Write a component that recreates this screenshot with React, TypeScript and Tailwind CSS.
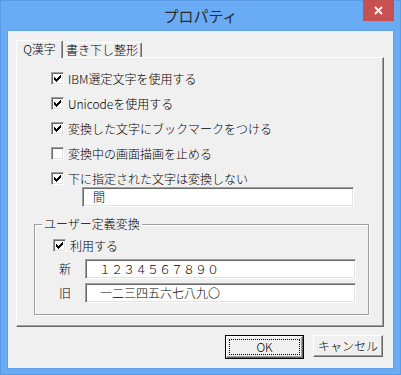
import React from "react";

const FONT = '"Noto Sans CJK JP", "Liberation Sans", sans-serif';

function CheckMark() {
  // classic 7x7 pixel check mark
  const px: [number, number][] = [
    [6, 0],
    [5, 1], [6, 1],
    [0, 2], [4, 2], [5, 2], [6, 2],
    [0, 3], [1, 3], [3, 3], [4, 3], [5, 3],
    [0, 4], [1, 4], [2, 4], [3, 4], [4, 4],
    [1, 5], [2, 5], [3, 5],
    [2, 6],
  ];
  return (
    <svg width="7" height="7" viewBox="0 0 7 7" shapeRendering="crispEdges">
      {px.map(([x, y]) => (
        <rect key={`${x}-${y}`} x={x} y={y} width="1" height="1" fill="#000" />
      ))}
    </svg>
  );
}

function Check({ checked }: { checked: boolean }) {
  return (
    <span className="flex h-[13px] w-[13px] shrink-0 items-center justify-center border border-t-[#a0a0a0] border-l-[#a0a0a0] border-r-white border-b-white bg-white shadow-[inset_1px_1px_0_#696969,inset_-1px_-1px_0_#e3e3e3]">
      {checked && <CheckMark />}
    </span>
  );
}

function CheckRow({ checked, label }: { checked: boolean; label: string }) {
  return (
    <div className="flex h-[13px] items-center gap-[4px]">
      <Check checked={checked} />
      <span className="whitespace-nowrap text-[12px] leading-none">{label}</span>
    </div>
  );
}

function Field({ value, className }: { value: string; className?: string }) {
  return (
    <div
      className={`flex h-[20px] items-center border border-t-[#a0a0a0] border-l-[#a0a0a0] border-r-white border-b-white bg-white shadow-[inset_1px_1px_0_#696969,inset_-1px_-1px_0_#e3e3e3] text-[12px] leading-none ${className ?? ""}`}
    >
      {value}
    </div>
  );
}

export default function App() {
  return (
    <div
      className="flex h-[375px] w-[401px] flex-col border border-[#5a9be3] bg-[#6aabf5] font-light text-black"
      style={{ fontFamily: FONT }}
    >
      {/* title bar */}
      <div className="relative flex h-[29px] items-center justify-center">
        <span className="text-[15px] font-normal leading-none text-[#2a2a2a]">プロパティ</span>
        <div className="absolute right-[6px] top-[-1px] flex h-[21px] w-[31px] items-center justify-center bg-[#c75050]">
          <svg width="9" height="9" viewBox="0 0 9 9">
            <path d="M1 1 L8 8 M8 1 L1 8" stroke="#fff" strokeWidth="1.8" />
          </svg>
        </div>
      </div>

      {/* client area */}
      <div className="mx-[6px] flex h-[339px] flex-col border border-[#5e9fe4] bg-[#f0f0f0] pl-[8px] pt-[9px]">
        {/* tabs */}
        <div className="flex h-[17px] items-end">
          <div className="relative z-10 -mb-px flex h-[18px] w-[47px] items-start justify-center rounded-t-[2px] border-l border-t border-r border-l-white border-t-white border-r-[#696969] bg-[#f0f0f0] pt-[2px] text-[12px] leading-none shadow-[inset_-1px_0_0_#a0a0a0]">
            Q漢字
          </div>
          <div className="flex h-[15px] w-[79px] items-start justify-center rounded-t-[2px] border-t border-r border-t-white border-r-[#696969] pt-[1px] text-[12px] leading-none shadow-[inset_-1px_0_0_#a0a0a0]">
            書き下し整形
          </div>
        </div>

        {/* panel */}
        <div className="flex h-[270px] w-[368px] flex-col border border-t-white border-l-white border-r-[#696969] border-b-[#696969] shadow-[inset_-1px_-1px_0_#a0a0a0]">
          <div className="flex flex-col gap-[12px] pl-[34px] pt-[14px]">
            <CheckRow checked label="IBM選定文字を使用する" />
            <CheckRow checked label="Unicodeを使用する" />
            <CheckRow checked label="変換した文字にブックマークをつける" />
            <CheckRow checked={false} label="変換中の画面描画を止める" />
            <CheckRow checked label="下に指定された文字は変換しない" />
          </div>
          <Field value="間" className="ml-[65px] mt-[2px] w-[272px] pl-[10px]" />

          {/* group box */}
          <div className="relative ml-[17px] mt-[17px] h-[91px] w-[335px] border border-[#a0a0a0] shadow-[1px_1px_0_#fff,inset_1px_1px_0_#fff]">
            <span className="absolute left-[7px] top-[-7px] bg-[#f0f0f0] px-[2px] text-[12px] leading-none">
              ユーザー定義変換
            </span>
            <div className="ml-[18px] mt-[14px]">
              <CheckRow checked label="利用する" />
            </div>
            <div className="mt-[7px] flex items-center">
              <span className="w-[50px] pl-[24px] text-[12px] leading-none">新</span>
              <Field value="１２３４５６７８９０" className="w-[271px] pl-[13px]" />
            </div>
            <div className="mt-[4px] flex items-center">
              <span className="w-[50px] pl-[24px] text-[12px] leading-none">旧</span>
              <Field value="一二三四五六七八九〇" className="w-[271px] pl-[14px]" />
            </div>
          </div>
        </div>

        {/* buttons */}
        <div className="mt-[8px] flex w-[368px] justify-end gap-[9px] pr-px">
          <div className="flex h-[24px] w-[79px] items-center justify-center border border-black bg-[#f0f0f0]">
            <div className="flex h-full w-full items-center justify-center border border-t-white border-l-white border-r-[#696969] border-b-[#696969] shadow-[inset_-1px_-1px_0_#a0a0a0]">
              <div className="flex h-[16px] w-[71px] items-center justify-center border border-dotted border-black text-[12px] leading-none">
                OK
              </div>
            </div>
          </div>
          <div className="flex h-[22px] w-[70px] items-center justify-center border border-t-white border-l-white border-r-[#696969] border-b-[#696969] bg-[#f0f0f0] text-[12px] leading-none shadow-[inset_-1px_-1px_0_#a0a0a0]">
            キャンセル
          </div>
        </div>
      </div>
    </div>
  );
}
